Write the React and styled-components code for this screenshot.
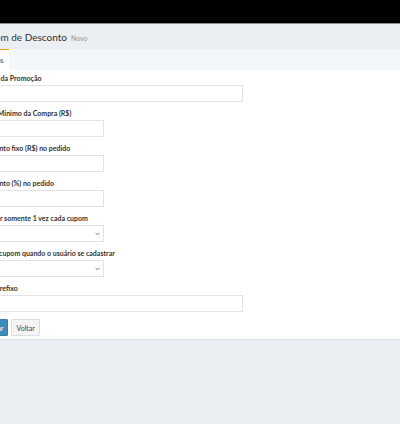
import React from "react";
import styled, { createGlobalStyle } from "styled-components";

const Global = createGlobalStyle`
  html, body { margin: 0; padding: 0; }
  body {
    background: #ebeef2;
    font-family: "Lato", "Open Sans", sans-serif;
    color: #333;
    overflow: hidden;
  }
  * { box-sizing: border-box; }
`;

const TopBar = styled.div`
  height: 24px;
  background: #000;
  border-bottom: 1px solid #8a8a8a;
`;

const Main = styled.div`
  margin-left: -30px;
  width: calc(100% + 30px);
`;

const Header = styled.div`
  height: 25px;
  display: flex;
  align-items: center;
  gap: 4px;
  padding-left: 7px;
  background: #ebeef2;
`;

const Title = styled.h1`
  margin: 0;
  font-size: 10px;
  font-weight: 400;
  color: #333;
`;

const Small = styled.span`
  font-size: 7px;
  color: #999;
  padding-top: 2px;
`;

const Tabs = styled.div`
  height: 21px;
  display: flex;
  padding-left: 9px;
  background: #f4f7fa;
`;

const Tab = styled.div`
  display: flex;
  align-items: center;
  padding: 0 5px;
  font-size: 7px;
  color: #444;
  background: ${(p) => (p.$active ? "#fff" : "transparent")};
  border-top: 1px solid ${(p) => (p.$active ? "#f39c12" : "transparent")};
`;

const Form = styled.form`
  background: #fff;
  padding: 3px 10px 3px;
  border-bottom: 1px solid #dde1e6;
`;

const Group = styled.div`
  margin-bottom: 6px;
`;

const Label = styled.label`
  display: block;
  height: 10px;
  line-height: 10px;
  font-size: 7px;
  font-weight: 700;
  color: #333;
  margin-bottom: 2px;
  white-space: nowrap;
`;

const Input = styled.input`
  display: block;
  width: ${(p) => (p.$wide ? "263px" : "124px")};
  height: 17px;
  border: 1px solid #e3e3e3;
  background: #fff;
  padding: 0 4px;
  font-size: 7px;
  outline: none;
`;

const SelectWrap = styled.div`
  position: relative;
  width: 124px;
  height: 17px;
  border: 1px solid #e3e3e3;
  background: #fff;
`;

const Chevron = styled.svg`
  position: absolute;
  right: 3px;
  top: 6px;
`;

const Buttons = styled.div`
  display: flex;
  gap: 3px;
  margin-top: 7px;
`;

const Button = styled.button`
  height: 17px;
  padding: 0 4px;
  font-family: inherit;
  font-size: 7px;
  border-radius: 1px;
  cursor: pointer;
  color: ${(p) => (p.$primary ? "#fff" : "#444")};
  background: ${(p) => (p.$primary ? "#3c8dbc" : "#f4f4f4")};
  border: 1px solid ${(p) => (p.$primary ? "#367fa9" : "#ddd")};
`;

function Select() {
  return (
    <SelectWrap>
      <Chevron width="5" height="4" viewBox="0 0 5 4">
        <path d="M0.5 0.8 L2.5 2.8 L4.5 0.8" fill="none" stroke="#666" strokeWidth="0.9" />
      </Chevron>
    </SelectWrap>
  );
}

export default function App() {
  return (
    <>
      <Global />
      <TopBar />
      <Main>
        <Header>
          <Title>Cupom de Desconto</Title>
          <Small>Novo</Small>
        </Header>
        <Tabs>
          <Tab $active>Dados</Tab>
        </Tabs>
        <Form onSubmit={(e) => e.preventDefault()}>
          <Group>
            <Label>Nome da Promoção</Label>
            <Input $wide />
          </Group>
          <Group>
            <Label>Valor Mínimo da Compra (R$)</Label>
            <Input />
          </Group>
          <Group>
            <Label>Desconto fixo (R$) no pedido</Label>
            <Input />
          </Group>
          <Group>
            <Label>Desconto (%) no pedido</Label>
            <Input />
          </Group>
          <Group>
            <Label>Utilizar somente 1 vez cada cupom</Label>
            <Select />
          </Group>
          <Group>
            <Label>Gerar cupom quando o usuário se cadastrar</Label>
            <Select />
          </Group>
          <Group>
            <Label>Usar prefixo</Label>
            <Input $wide />
          </Group>
          <Buttons>
            <Button $primary>Salvar</Button>
            <Button type="button">Voltar</Button>
          </Buttons>
        </Form>
      </Main>
    </>
  );
}
